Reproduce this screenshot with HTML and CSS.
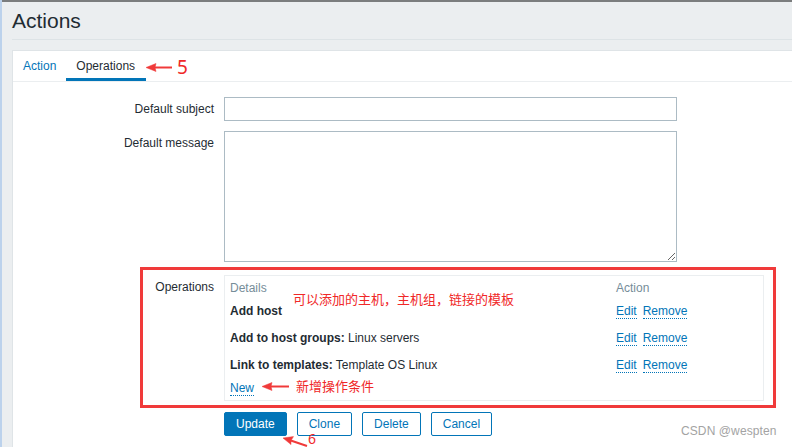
FILE: index.html
```html
<!DOCTYPE html>
<html lang="en">
<head>
<meta charset="utf-8">
<title>Actions</title>
<link rel="stylesheet" href="styles.css">
</head>
<body>
<div class="page">
  <div class="edge"></div>
  <div class="main">
    <header class="header">
      <h1 class="title">Actions</h1>
    </header>
    <section class="panel">
      <nav class="tabs">
        <a class="tab">Action</a>
        <a class="tab tab-active">Operations</a>
      </nav>
      <form class="form">
        <label class="label">Default subject</label>
        <div class="field"><input class="input" type="text"></div>

        <label class="label">Default message</label>
        <div class="field"><textarea class="textarea"></textarea></div>

        <label class="label label-ops">Operations</label>
        <div class="field">
          <div class="ops">
            <div class="ops-row ops-head">
              <span class="col-details">Details</span>
              <span class="col-action">Action</span>
            </div>
            <div class="ops-row">
              <span class="col-details"><b>Add host</b></span>
              <span class="col-action"><a class="link">Edit</a><a class="link">Remove</a></span>
            </div>
            <div class="ops-row">
              <span class="col-details"><b>Add to host groups:</b> Linux servers</span>
              <span class="col-action"><a class="link">Edit</a><a class="link">Remove</a></span>
            </div>
            <div class="ops-row ops-last">
              <span class="col-details"><b>Link to templates:</b> Template OS Linux</span>
              <span class="col-action"><a class="link">Edit</a><a class="link">Remove</a></span>
            </div>
            <div class="ops-new"><a class="link">New</a></div>
          </div>
        </div>

        <div class="spacer"></div>
        <div class="buttons">
          <button type="button" class="btn btn-primary">Update</button>
          <button type="button" class="btn">Clone</button>
          <button type="button" class="btn">Delete</button>
          <button type="button" class="btn">Cancel</button>
        </div>
      </form>
    </section>
  </div>
</div>

<div class="overlay">
  <div class="redbox"></div>
  <span class="note note-5">5</span>
  <span class="note note-6">6</span>
  <span class="note note-cn note-hosts">可以添加的主机，主机组，链接的模板</span>
  <span class="note note-cn note-new">新增操作条件</span>
  <span class="watermark">CSDN @wespten</span>
  <svg class="arrows" width="792" height="447" viewBox="0 0 792 447">
    <g fill="#f03a3a" stroke="#f03a3a">
      <line x1="172" y1="67.5" x2="153" y2="67.5" stroke-width="2"/>
      <polygon points="146,67.5 156,63.5 155,67.5 156,71.5" stroke-width="0.5"/>
      <line x1="289" y1="386.5" x2="270" y2="386.5" stroke-width="2"/>
      <polygon points="262,386.5 272,382.5 271,386.5 272,390.5" stroke-width="0.5"/>
      <line x1="307" y1="446" x2="290" y2="440.3" stroke-width="2"/>
      <polygon points="283,438 293.5,436.6 291,440.6 291,444.6" stroke-width="0.5"/>
    </g>
  </svg>
</div>
</body>
</html>
```

FILE: styles.css
```css
* { box-sizing: border-box; }

html, body {
  margin: 0;
  height: 100%;
  overflow: hidden;
}

body {
  position: relative;
  background: #ebeef0;
  font-family: Arial, "Liberation Sans", sans-serif;
  font-size: 12px;
  color: #1f2c33;
}

.page {
  display: flex;
  min-height: 447px;
}

.edge {
  width: 2px;
  flex: 0 0 2px;
  background: #bcd2ec;
}

.main {
  flex: 1;
  border-top: 2px solid #7b7d7e;
  padding-left: 10px;
  min-width: 0;
}

.header {
  height: 38px;
  border-bottom: 1px solid #dde3e6;
  padding-top: 7px;
}

.title {
  margin: 0;
  font-size: 21px;
  font-weight: normal;
  line-height: 24px;
  color: #1f2c33;
}

.panel {
  margin-top: 10px;
  background: #ffffff;
  border-top: 1px solid #dfe4e7;
  border-left: 1px solid #dfe4e7;
  min-height: 400px;
}

.tabs {
  display: flex;
  border-bottom: 1px solid #ebeef0;
}

.tab {
  display: block;
  padding: 8px 10px 5px;
  line-height: 14px;
  color: #0275b8;
  border-bottom: 3px solid transparent;
}

.tab-active {
  color: #1f2c33;
  border-bottom-color: #0275b8;
  padding-right: 11px;
}

.form {
  display: grid;
  grid-template-columns: 201px 1fr;
  column-gap: 10px;
  padding-top: 15px;
}

.label {
  text-align: right;
  padding-top: 5px;
  line-height: 14px;
}

.label-ops {
  padding-top: 5px;
  margin-top: 13px;
}

.field { min-width: 0; }

.input {
  display: block;
  width: 453px;
  height: 24px;
  border: 1px solid #acbbc4;
  background: #fff;
  margin: 0 0 10px;
  padding: 0 5px;
  font: inherit;
}

.textarea {
  display: block;
  width: 453px;
  height: 131px;
  border: 1px solid #acbbc4;
  background: #fff;
  margin: 0;
  padding: 3px 5px;
  font: inherit;
  resize: both;
}

.ops {
  width: 540px;
  border: 1px solid #ebeef0;
  padding: 5px 5px 5px;
  line-height: 14px;
  margin-top: 13px;
}

.ops-row {
  display: flex;
  height: 14px;
  margin-bottom: 13px;
}

.ops-head {
  color: #768d99;
  margin-bottom: 9px;
}

.ops-last { margin-bottom: 9px; }

.col-details {
  width: 386px;
  flex: 0 0 386px;
}

.col-action {
  display: block;
}

.col-action .link + .link { margin-left: 6px; }

.ops-new { height: 14px; }

.link {
  color: #0275b8;
  border-bottom: 1px dotted #0275b8;
  cursor: pointer;
}

.buttons {
  display: flex;
  gap: 10px;
  margin-top: 11px;
}

.btn {
  height: 24px;
  padding: 0 11px;
  border: 1px solid #0275b8;
  border-radius: 2px;
  background: #ffffff;
  color: #0275b8;
  font-family: Arial, "Liberation Sans", sans-serif;
  font-size: 12px;
  line-height: 22px;
}

.btn-primary {
  background: #0275b8;
  color: #ffffff;
}

/* annotation layer */
.overlay {
  position: absolute;
  left: 0;
  top: 0;
  width: 792px;
  height: 447px;
  pointer-events: none;
}

.redbox {
  position: absolute;
  left: 140px;
  top: 267px;
  width: 636px;
  height: 141px;
  border: 3px solid #f03a3a;
}

.note {
  position: absolute;
  color: #f02828;
  font-family: "Noto Sans", "Liberation Sans", sans-serif;
  line-height: 1;
}

.note-5 {
  left: 177px;
  top: 58px;
  font-size: 19px;
}

.note-6 {
  left: 308px;
  top: 432px;
  font-size: 14px;
}

.note-cn {
  font-family: "Noto Sans CJK SC", "Noto Sans", sans-serif;
  font-size: 13px;
  line-height: 16px;
}

.note-hosts {
  left: 293px;
  top: 291px;
}

.note-new {
  left: 296px;
  top: 378px;
}

.watermark {
  position: absolute;
  left: 681px;
  top: 424px;
  font-family: Arial, "Liberation Sans", sans-serif;
  font-size: 12px;
  line-height: 14px;
  color: #a3a3a3;
  letter-spacing: 0.1px;
}

.arrows {
  position: absolute;
  left: 0;
  top: 0;
}
```
